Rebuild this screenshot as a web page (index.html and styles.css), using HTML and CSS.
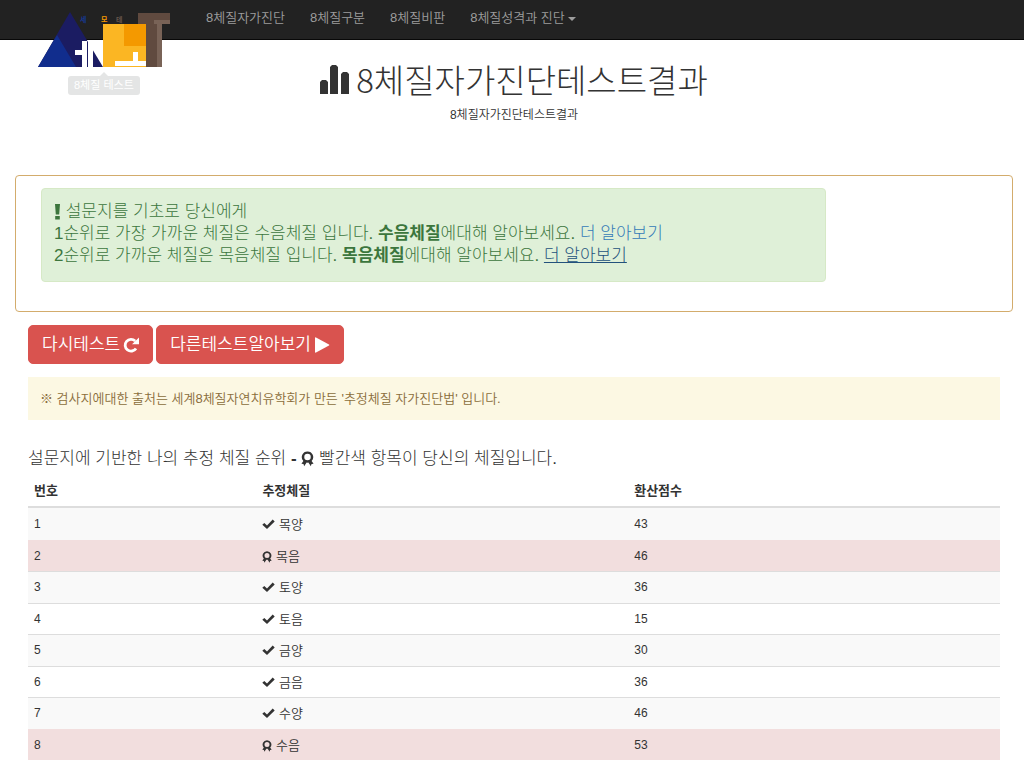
FILE: index.html
```html
<!DOCTYPE html>
<html lang="ko">
<head>
<meta charset="utf-8">
<meta name="viewport" content="width=device-width, initial-scale=1">
<title>8체질자가진단테스트결과</title>
<link rel="stylesheet" href="styles.css">
</head>
<body>
<svg class="sprite" aria-hidden="true">
  <symbol id="check" viewBox="0 0 13 10"><path d="M2.3 3.9 5 6.5 10.7.5l2 1.9L5 10 .3 5.7z"/></symbol>
  <symbol id="award" viewBox="0 0 12 14"><path fill-rule="evenodd" d="M6 0a5.2 5.2 0 0 1 3.8 8.8l1.8 2.6-1.9.3-.6 2.1-2.3-3.5a5 5 0 0 1-1.6 0l-2.3 3.5-.6-2.1-1.9-.3 1.8-2.6A5.2 5.2 0 0 1 6 0zm0 2.2a3 3 0 1 0 0 6 3 3 0 0 0 0-6z"/></symbol>
</svg>
<nav class="navbar">
  <a class="brand" href="#" aria-label="세모테">
    <svg class="logo" viewBox="38 12 132 56" aria-hidden="true">
      <path fill="#1b1c62" d="M70 12 103 67H38z"/>
      <path fill="#112d8d" d="M57 35 76 67H38z"/>
      <path fill="#fff" d="M75 50h7v-9h5v26h-5V55h-7zM88 40h5v27h-5z"/>
      <path fill="#fbb623" d="M103 24h43v43h-43z"/>
      <path fill="#f49900" d="M124 24h22v22h-22z"/>
      <path fill="#fff" d="M133 52h5v9h8v5h-31v-5h18z"/>
      <path fill="#604a3f" d="M138 13h32v11h-8v43h-16V24h-8z"/>
      <path fill="#796357" d="M154 20h16v4h-8v43h-5V24h-3z"/>
      <text class="logo-text" x="80" y="22" fill="#17388f">세</text>
      <text class="logo-text" x="101" y="22" fill="#f49900">모</text>
      <text class="logo-text" x="116" y="22" fill="#67564c">테</text>
    </svg>
    <span class="brand-tip">8체질 테스트</span>
  </a>
  <ul class="menu">
    <li><a href="#">8체질자가진단</a></li>
    <li><a href="#">8체질구분</a></li>
    <li><a href="#">8체질비판</a></li>
    <li><a href="#">8체질성격과 진단 <span class="caret"></span></a></li>
  </ul>
</nav>
<header class="page-head">
  <h1><svg class="stats" viewBox="0 0 29 30" aria-hidden="true"><path d="M0 30V18l2-2h4l2 2v12zM10 30V3l2-2h4l2 2v27zM21 30V10l2-2h4l2 2v20z"/></svg>8체질자가진단테스트결과</h1>
  <p>8체질자가진단테스트결과</p>
</header>
<main class="content">
  <section class="panel">
    <p class="alert"><svg class="bang" viewBox="0 0 7 16" aria-hidden="true"><path d="M1 0h5l-.8 10.4H1.8zM1.2 12h4.6v3.6H1.2z"/></svg> 설문지를 기초로 당신에게<br>
    1순위로 가장 가까운 체질은 수음체질 입니다. <strong>수음체질</strong>에대해 알아보세요. <a href="#">더 알아보기</a><br>
    2순위로 가까운 체질은 목음체질 입니다. <strong>목음체질</strong>에대해 알아보세요. <a class="active" href="#">더 알아보기</a></p>
  </section>
  <div class="body">
    <div class="actions">
      <button class="btn" type="button">다시테스트 <svg viewBox="0 0 16 16" aria-hidden="true"><path fill="none" stroke="currentColor" stroke-width="2.8" d="M12.2 4A5.9 5.9 0 1 0 13 11.4"/><path d="M16 .4v6.8H9z"/></svg></button>
      <button class="btn" type="button">다른테스트알아보기 <svg viewBox="0 0 16 16" aria-hidden="true"><path d="M1 1q0-1 1-.5l13 7q.8.5 0 1l-13 7q-1 .5-1-.5z"/></svg></button>
    </div>
    <p class="notice">※ 검사지에대한 출처는 세계8체질자연치유학회가 만든 '추정체질 자가진단법' 입니다.</p>
    <h2>설문지에 기반한 나의 추정 체질 순위 <b>-</b> <svg class="award-lg" aria-hidden="true"><use href="#award"/></svg> 빨간색 항목이 당신의 체질입니다.</h2>
    <table class="ranks">
      <thead><tr><th class="col-no" scope="col">번호</th><th scope="col">추정체질</th><th scope="col">환산점수</th></tr></thead>
      <tbody>
        <tr><td class="num">1</td><td><svg class="check"><use href="#check"/></svg> 목양</td><td class="num">43</td></tr>
        <tr class="danger"><td class="num">2</td><td><svg class="award"><use href="#award"/></svg> 목음</td><td class="num">46</td></tr>
        <tr><td class="num">3</td><td><svg class="check"><use href="#check"/></svg> 토양</td><td class="num">36</td></tr>
        <tr><td class="num">4</td><td><svg class="check"><use href="#check"/></svg> 토음</td><td class="num">15</td></tr>
        <tr><td class="num">5</td><td><svg class="check"><use href="#check"/></svg> 금양</td><td class="num">30</td></tr>
        <tr><td class="num">6</td><td><svg class="check"><use href="#check"/></svg> 금음</td><td class="num">36</td></tr>
        <tr><td class="num">7</td><td><svg class="check"><use href="#check"/></svg> 수양</td><td class="num">46</td></tr>
        <tr class="danger"><td class="num">8</td><td><svg class="award"><use href="#award"/></svg> 수음</td><td class="num">53</td></tr>
      </tbody>
    </table>
  </div>
</main>
</body>
</html>
```
FILE: styles.css
```css
* { box-sizing: border-box; }
body {
  margin: 0;
  background: #fff;
  color: #333;
  font-family: "Liberation Sans", "Noto Sans CJK KR", sans-serif;
  font-size: 13px;
  font-weight: 350;
  line-height: 19px;
}
svg { fill: currentColor; }
.sprite { position: absolute; width: 0; height: 0; }

.navbar {
  display: flex;
  height: 40px;
  padding-left: 38px;
  background: #222;
  border-bottom: 1px solid #080808;
}
.brand { position: relative; width: 132px; padding-top: 12px; }
.logo { display: block; width: 132px; height: 56px; }
.logo-text { font-size: 7px; font-weight: 700; }
.brand-tip {
  position: absolute;
  top: 76px;
  left: 30px;
  padding: 0 6px;
  border-radius: 3px;
  background: #e4e5e5;
  color: #fff;
  font-size: 11px;
  font-weight: 400;
  white-space: nowrap;
}
.brand-tip::before {
  content: "";
  position: absolute;
  top: -4px;
  left: 50%;
  margin-left: -4px;
  border: 4px solid transparent;
  border-top: 0;
  border-bottom-color: #e4e5e5;
}
.menu {
  display: flex;
  gap: 25px;
  margin: 0;
  padding: 8px 0 0 36px;
  list-style: none;
}
.menu a { color: #9d9d9d; text-decoration: none; }
.caret {
  display: inline-block;
  vertical-align: middle;
  border: 4px solid transparent;
  border-top-color: currentColor;
  border-bottom: 0;
}

.page-head { padding: 18px 0 50px; text-align: center; }
h1 {
  margin: 0;
  padding-left: 4px;
  font-family: "Noto Sans CJK KR", sans-serif;
  font-size: 33px;
  font-weight: 300;
  line-height: 42px;
}
.stats { width: 29px; height: 30px; margin-right: 7px; vertical-align: -1px; }
.page-head p { margin: 6px 0 0; padding-left: 4px; font-size: 12px; }

.content { margin: 0 11px 0 15px; }
.panel {
  padding: 12px 25px 29px;
  border: 1px solid #d3ac6c;
  border-radius: 4px;
}
.alert {
  width: 83%;
  margin: 0;
  padding: 12px;
  padding-bottom: 14px;
  border: 1px solid #d6e9c6;
  border-radius: 4px;
  background: #dff0d8;
  color: #3c763d;
  font-size: 17px;
  font-weight: 300;
  line-height: 22px;
}
.alert strong { font-weight: 700; }
.alert a { color: #337ab7; text-decoration: none; }
.alert a.active { color: #23527c; text-decoration: underline; }
.bang { width: 7px; height: 16px; vertical-align: -3px; }

.body { padding: 13px 13px 0; }
.actions { display: flex; gap: 3px; }
.btn {
  display: flex;
  align-items: center;
  gap: 3px;
  padding: 8px 13px;
  border: 1px solid #d9534f;
  border-radius: 5px;
  background: #d9534f;
  color: #fff;
  font: inherit;
  font-size: 17px;
  line-height: 21px;
}
.btn svg { width: 16px; height: 16px; }
.notice {
  margin: 13px 0 0;
  padding: 12px;
  background: #fcf8e3;
  color: #8a6d3b;
}
h2 { margin: 28px 0 5px; font-size: 17px; font-weight: 300; line-height: 22px; }
h2 b { font-weight: 700; }
.award-lg { width: 13px; height: 16px; vertical-align: -3px; }

.ranks { width: 100%; border-collapse: separate; border-spacing: 0; table-layout: fixed; }
.col-no { width: 23.5%; }
th, td { padding: 6px; text-align: left; vertical-align: middle; }
th { border-bottom: 2px solid #ddd; font-weight: 700; }
td { border-top: 1px solid #ddd; }
.num { font-size: 12px; font-weight: 400; }
tbody tr:first-child td { border-top-color: #f9f9f9; }
tbody tr:nth-child(odd) { background: #f9f9f9; }
tbody tr:nth-child(even) td { padding-bottom: 5px; }
tbody tr.danger { background: #f2dede; }
.danger td { border-color: #f2dede; }
.check { width: 13px; height: 10px; }
.award { width: 10px; height: 12px; vertical-align: -2px; }
```
